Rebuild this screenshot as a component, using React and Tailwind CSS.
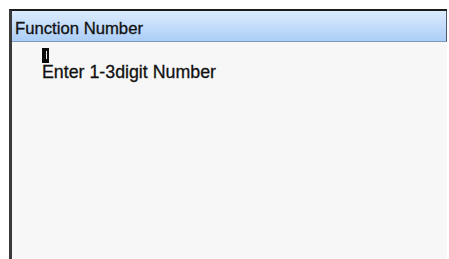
export default function App() {
  return (
    <div className="w-[449px] h-[259px] bg-white pt-[9px] pl-[9px] pr-[2px] overflow-hidden" style={{ fontFamily: '"Liberation Sans", Arial, sans-serif' }}>
      <div className="h-[260px] border-t-2 border-l-[3px] border-t-[#1c1c1c] border-l-[#3a3a3a] bg-[#f7f7f7] flex flex-col">
        <div className="h-[31px] shrink-0 bg-gradient-to-b from-[#dcebfd] via-[#c4ddfb] to-[#abcdf7] border-b border-b-[#7d98b8] border-r border-r-[#4d5a6b] pl-[3px] pt-[9px] text-[16.7px] leading-[17px] text-[#111] [-webkit-text-stroke:0.3px_#111]">
          Function Number
        </div>
        <div className="pl-[30px] pt-[6px] flex flex-col items-start">
          <div className="relative w-[7px] h-[15px] bg-[#0a0a0a]">
            <div className="absolute left-[4px] top-[3px] w-[1px] h-[8px] bg-[#e8e8e8]" />
          </div>
          <div className="mt-[1px] text-[17.8px] leading-[17px] text-[#111] [-webkit-text-stroke:0.3px_#111]">Enter 1-3digit Number</div>
        </div>
      </div>
    </div>
  );
}
